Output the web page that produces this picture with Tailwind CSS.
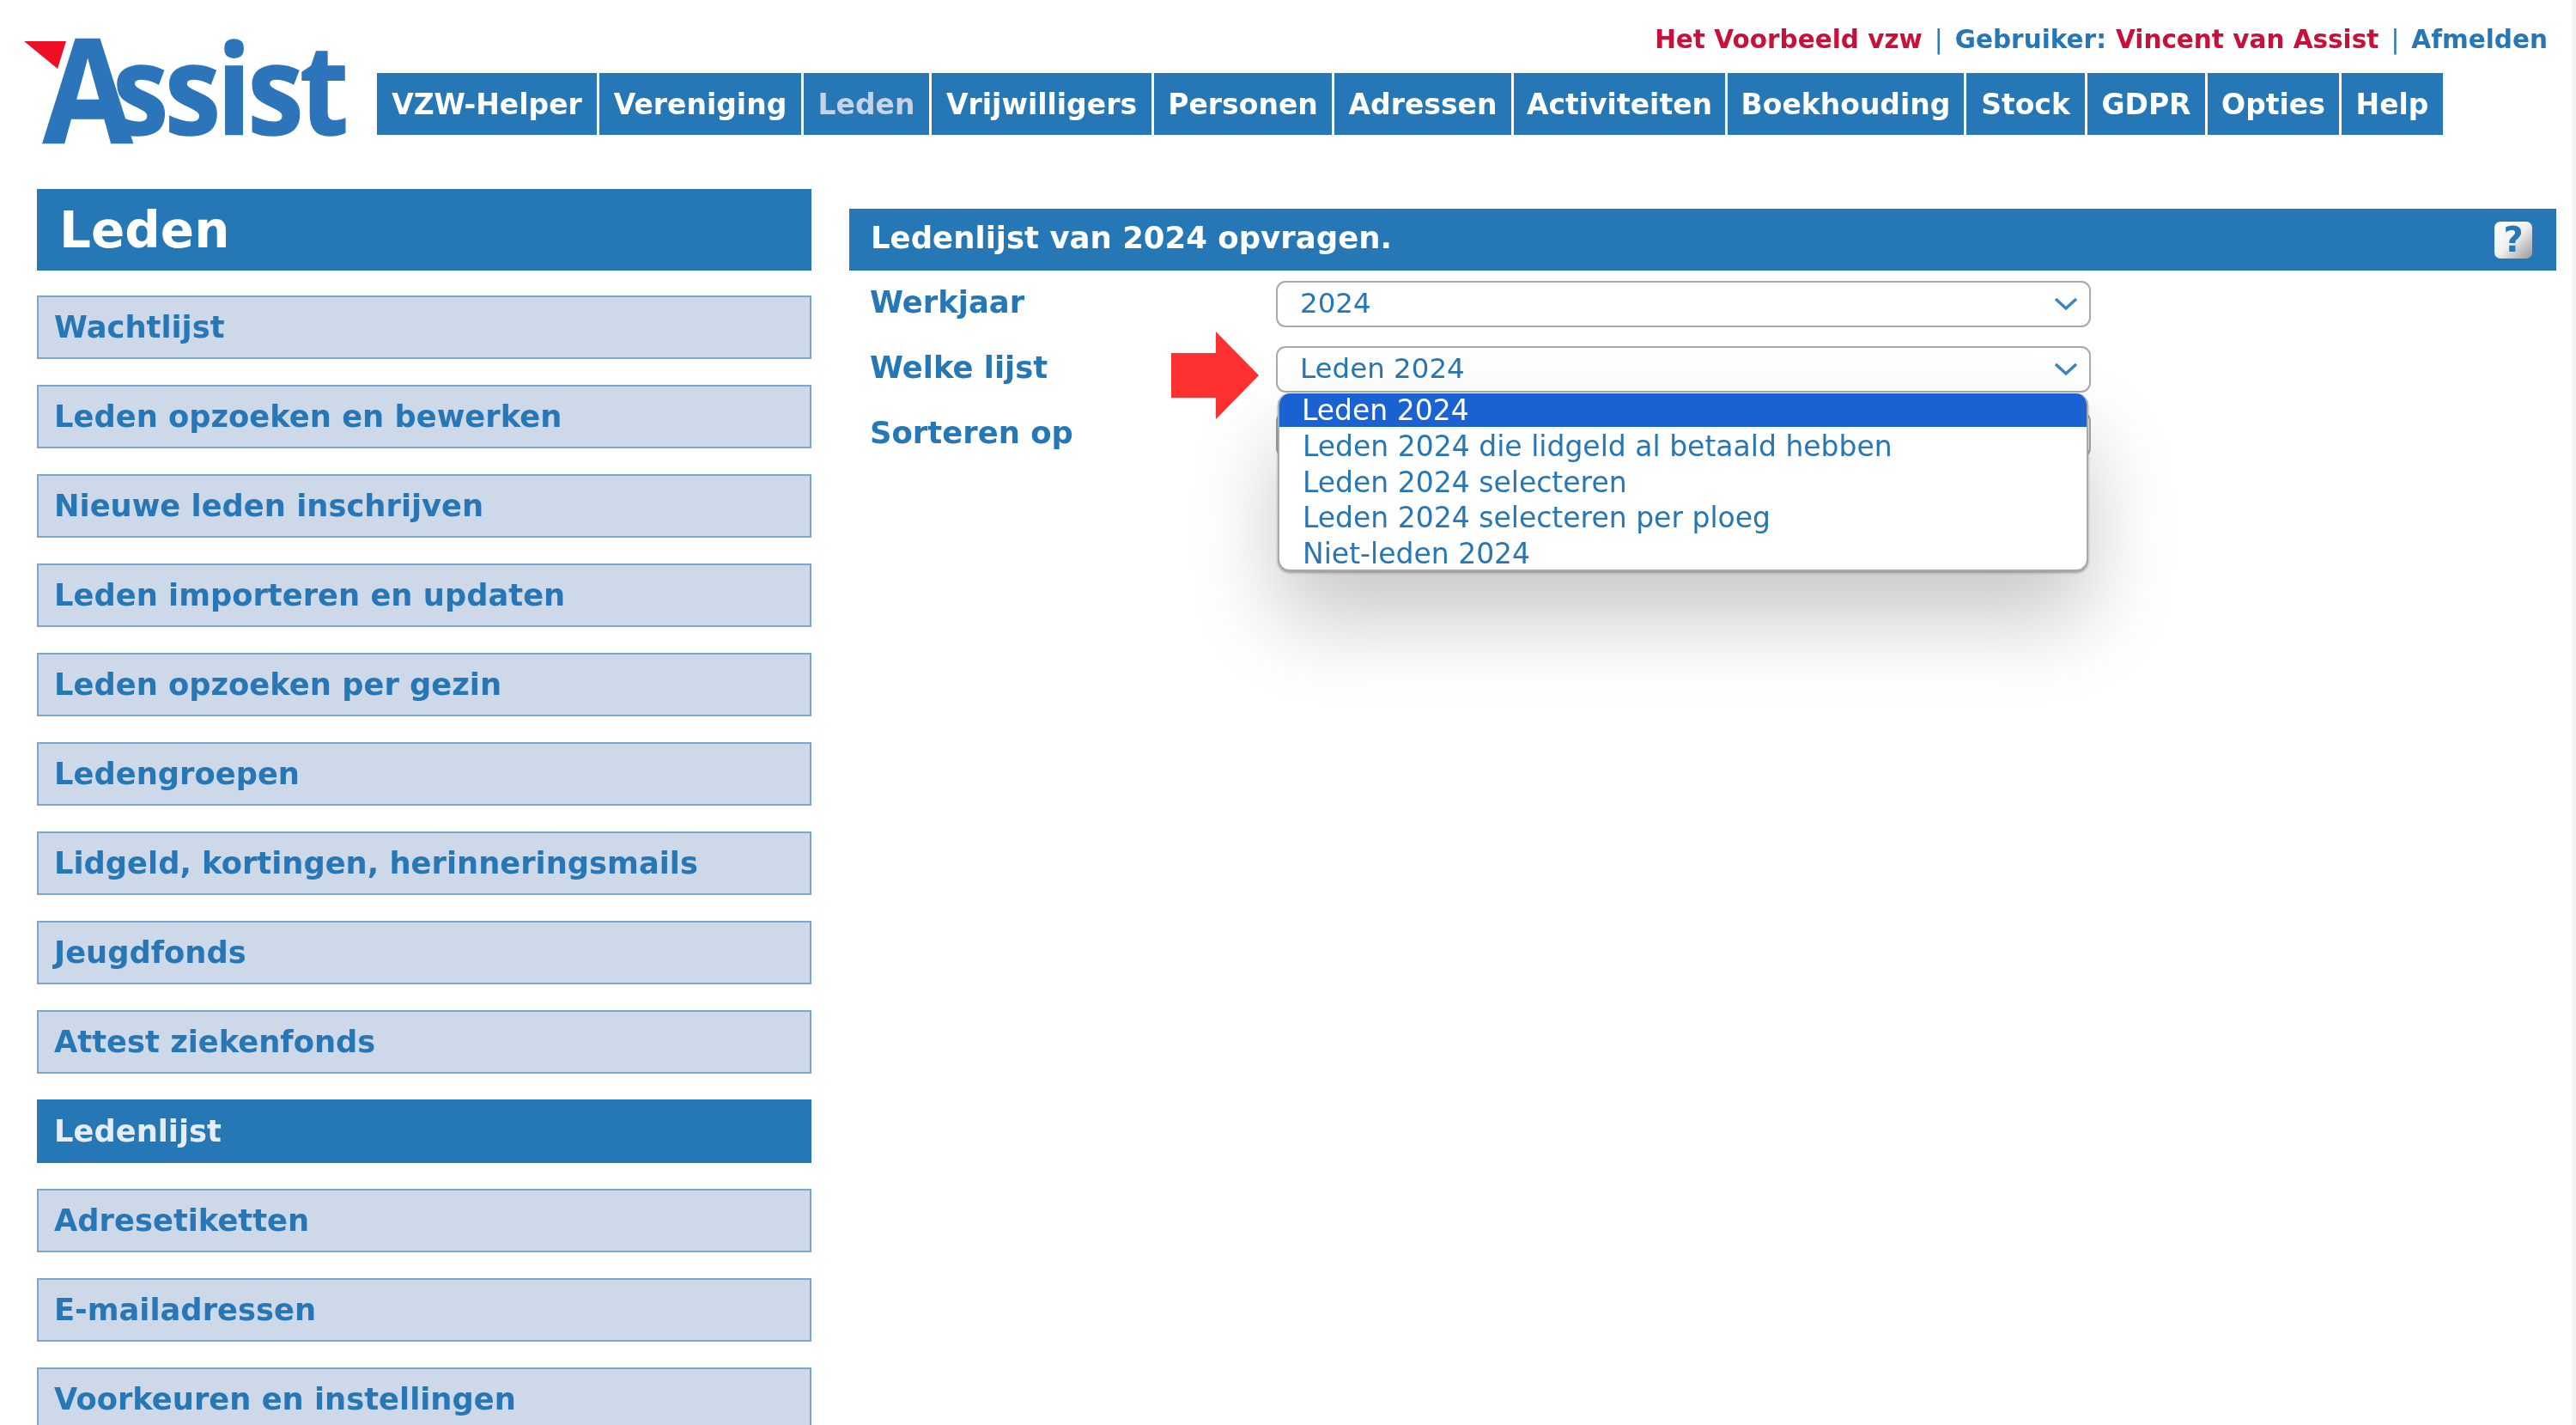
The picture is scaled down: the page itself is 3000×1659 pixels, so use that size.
<!DOCTYPE html>
<html lang="nl">
<head>
    <meta charset="UTF-8">
    <title>Assist - Ledenlijst</title>
    <script src="https://cdn.jsdelivr.net/npm/@tailwindcss/browser@4"></script>
</head>
<body class="bg-white font-['DejaVu_Sans',sans-serif] text-[#2776b5]">
    <div class="w-[3000px] h-[1659px] overflow-hidden relative border-r-[5px] border-[#f2f2f2] blur-[0.6px]">
        <!-- Header -->
        <header class="flex h-[220px]">
            <div class="w-[439px] pl-[28px] pt-[46px] shrink-0">
                <svg class="overflow-visible" width="390" height="126" viewBox="28 46 390 126">
                    <text transform="translate(50 167) scale(.9 1)" font-family="Open Sans" font-weight="700" fill="#2d75bb" stroke="#2d75bb" stroke-width="1.5"><tspan font-size="168">A</tspan><tspan font-size="146" dx="-26" dy="-10" letter-spacing="-5">ssist</tspan></text>
                    <polygon points="28,48 77,48 67,80" fill="#ee0f24"/>
                </svg>
            </div>
            <div class="flex-1 min-w-0">
                <div class="h-[85px] flex justify-end items-start pt-[26px] pr-[28px] text-[29.5px] leading-[40px] font-bold whitespace-nowrap">
                    <span class="text-[#c9103a]">Het Voorbeeld vzw</span>
                    <span class="mx-[14px] font-normal">|</span>
                    <span>Gebruiker:</span>
                    <span class="ml-[11px] text-[#c9103a]">Vincent van Assist</span>
                    <span class="mx-[14px] font-normal">|</span>
                    <span>Afmelden</span>
                </div>
                <nav class="flex h-[72px] gap-[3px] text-white font-bold text-[33px]">
                    <a class="w-[256px] pt-[1px] bg-[#2677b5] flex items-center justify-center">VZW-Helper</a>
                    <a class="w-[235px] pt-[1px] bg-[#2677b5] flex items-center justify-center">Vereniging</a>
                    <a class="w-[146px] pt-[1px] bg-[#2677b5] flex items-center justify-center text-[#c5d3e6]">Leden</a>
                    <a class="w-[256px] pt-[1px] bg-[#2677b5] flex items-center justify-center">Vrijwilligers</a>
                    <a class="w-[207px] pt-[1px] bg-[#2677b5] flex items-center justify-center">Personen</a>
                    <a class="w-[206px] pt-[1px] bg-[#2677b5] flex items-center justify-center">Adressen</a>
                    <a class="w-[246px] pt-[1px] bg-[#2677b5] flex items-center justify-center">Activiteiten</a>
                    <a class="w-[275px] pt-[1px] bg-[#2677b5] flex items-center justify-center">Boekhouding</a>
                    <a class="w-[138px] pt-[1px] bg-[#2677b5] flex items-center justify-center">Stock</a>
                    <a class="w-[137px] pt-[1px] bg-[#2677b5] flex items-center justify-center">GDPR</a>
                    <a class="w-[153px] pt-[1px] bg-[#2677b5] flex items-center justify-center">Opties</a>
                    <a class="w-[118px] pt-[1px] bg-[#2677b5] flex items-center justify-center">Help</a>
                </nav>
            </div>
        </header>

        <main class="flex pl-[43px] gap-[44px]">
            <!-- Sidebar -->
            <aside class="w-[902px] shrink-0">
                <h1 class="h-[95px] mb-[29px] bg-[#2677b5] text-white font-bold text-[58px] leading-[97px] pl-[26px]">Leden</h1>
                <ul class="flex flex-col gap-[30px] text-[35.3px] font-bold">
                    <li class="h-[74px] leading-[70px] pl-[18px] bg-[#cdd9e9] border-2 border-[#7ba6d0]">Wachtlijst</li>
                    <li class="h-[74px] leading-[70px] pl-[18px] bg-[#cdd9e9] border-2 border-[#7ba6d0]">Leden opzoeken en bewerken</li>
                    <li class="h-[74px] leading-[70px] pl-[18px] bg-[#cdd9e9] border-2 border-[#7ba6d0]">Nieuwe leden inschrijven</li>
                    <li class="h-[74px] leading-[70px] pl-[18px] bg-[#cdd9e9] border-2 border-[#7ba6d0]">Leden importeren en updaten</li>
                    <li class="h-[74px] leading-[70px] pl-[18px] bg-[#cdd9e9] border-2 border-[#7ba6d0]">Leden opzoeken per gezin</li>
                    <li class="h-[74px] leading-[70px] pl-[18px] bg-[#cdd9e9] border-2 border-[#7ba6d0]">Ledengroepen</li>
                    <li class="h-[74px] leading-[70px] pl-[18px] bg-[#cdd9e9] border-2 border-[#7ba6d0]">Lidgeld, kortingen, herinneringsmails</li>
                    <li class="h-[74px] leading-[70px] pl-[18px] bg-[#cdd9e9] border-2 border-[#7ba6d0]">Jeugdfonds</li>
                    <li class="h-[74px] leading-[70px] pl-[18px] bg-[#cdd9e9] border-2 border-[#7ba6d0]">Attest ziekenfonds</li>
                    <li class="h-[74px] leading-[70px] pl-[18px] bg-[#2677b5] border-2 border-[#2677b5] text-[#e4edf6]">Ledenlijst</li>
                    <li class="h-[74px] leading-[70px] pl-[18px] bg-[#cdd9e9] border-2 border-[#7ba6d0]">Adresetiketten</li>
                    <li class="h-[74px] leading-[70px] pl-[18px] bg-[#cdd9e9] border-2 border-[#7ba6d0]">E-mailadressen</li>
                    <li class="h-[74px] leading-[70px] pl-[18px] bg-[#cdd9e9] border-2 border-[#7ba6d0]">Voorkeuren en instellingen</li>
                </ul>
            </aside>

            <!-- Content -->
            <section class="w-[1988px] pt-[23px]">
                <div class="h-[72px] bg-[#2677b5] flex items-center justify-between pl-[25px] pr-[28px] text-white font-bold text-[35.5px]">
                    <span class="mb-[5px]">Ledenlijst van 2024 opvragen.</span>
                    <span class="w-[44px] h-[43px] rounded-[7px] bg-gradient-to-br from-white via-[#f0f0f0] to-[#9a9a9a] text-[#2677b5] text-[40px] leading-[43px] text-center">?</span>
                </div>
                <div class="mt-[12px] pl-[24px] flex flex-col gap-[22px]">
                    <div class="flex h-[54px]">
                        <label class="w-[473px] text-[#2677b5] font-bold text-[35.4px] leading-[50px]">Werkjaar</label>
                        <div class="w-[949px] border-2 border-[#a9a9a9] rounded-[11px] flex items-center justify-between pl-[26px] pr-[13px] text-[32.5px]">
                            <span class="mb-[1px]">2024</span>
                            <svg width="28" height="16" viewBox="0 0 28 16" fill="none" stroke="#3a85c0" stroke-width="3.5"><path d="M2 2 L14 13 L26 2"/></svg>
                        </div>
                    </div>
                    <div class="flex h-[54px] relative">
                        <label class="w-[473px] text-[#2677b5] font-bold text-[35.4px] leading-[50px]">Welke lijst</label>
                        <div class="relative w-[949px] border-2 border-[#a9a9a9] rounded-[11px] flex items-center justify-between pl-[26px] pr-[13px] text-[32.5px]">
                            <span class="mb-[1px]">Leden 2024</span>
                            <svg width="28" height="16" viewBox="0 0 28 16" fill="none" stroke="#3a85c0" stroke-width="3.5"><path d="M2 2 L14 13 L26 2"/></svg>
                            <!-- rode pijl -->
                            <svg class="absolute left-[-124px] top-[-19px]" width="103" height="103" viewBox="0 0 103 103"><polygon points="0,25 52,25 52,0 102,51 52,102 52,77 0,77" fill="#ff3030"/></svg>
                            <!-- open lijst -->
                            <ul class="absolute z-10 left-0 top-[53px] w-[944px] h-[207px] bg-white border-x-2 border-b-2 border-[#a9a9a9] rounded-[14px] overflow-hidden shadow-[0_2px_3px_rgba(0,0,0,0.3),0_55px_100px_rgba(0,0,0,0.22)] text-[33px] leading-[41.7px]">
                                <li class="h-[39px] leading-[39px] bg-[#1a62d2] text-white pl-[26px]">Leden 2024</li>
                                <li class="pt-[2px] pl-[27px]">Leden 2024 die lidgeld al betaald hebben</li>
                                <li class="pl-[27px]">Leden 2024 selecteren</li>
                                <li class="pl-[27px]">Leden 2024 selecteren per ploeg</li>
                                <li class="pl-[27px]">Niet-leden 2024</li>
                            </ul>
                        </div>
                    </div>
                    <div class="flex h-[54px]">
                        <label class="w-[473px] text-[#2677b5] font-bold text-[35.4px] leading-[50px]">Sorteren op</label>
                        <div class="w-[949px] border-2 border-[#a9a9a9] rounded-[11px]"></div>
                    </div>
                </div>
            </section>
        </main>
    </div>
</body>
</html>
